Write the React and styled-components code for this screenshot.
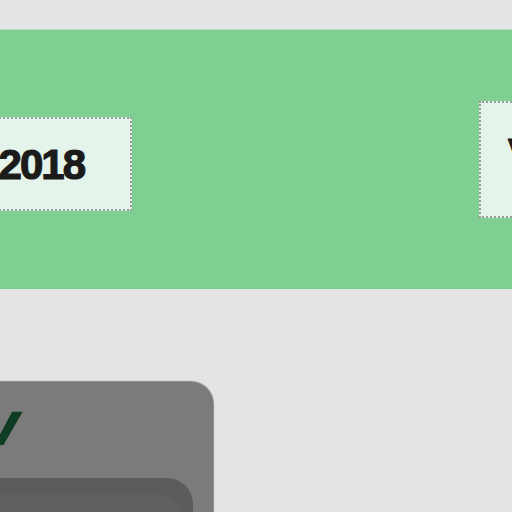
import React from "react";
import styled, { createGlobalStyle } from "styled-components";

const GlobalStyle = createGlobalStyle`
  html, body {
    margin: 0;
    padding: 0;
    background: #e4e4e4;
    font-family: "Liberation Sans", Arial, sans-serif;
    overflow: hidden;
  }
`;

const Page = styled.div`
  width: 512px;
  height: 512px;
  padding-top: 29px;
  box-sizing: border-box;
  overflow: hidden;
`;

const Band = styled.div`
  height: 260px;
  background: #7fcf92;
  border-top: 1px solid #b9dcc1;
  box-sizing: border-box;
  display: flex;
  align-items: center;
  justify-content: space-between;
  overflow: hidden;
`;

const Tag = styled.div`
  flex: none;
  box-sizing: border-box;
  background: #e4f4ea;
  border: 2px dotted #9a9a9a;
  display: flex;
  align-items: center;
  color: #1b1b1b;
  font-weight: 700;
  font-size: ${(p) => p.$size || 42}px;
  letter-spacing: -2px;
  -webkit-text-stroke: 1.2px #1b1b1b;
`;

const YearTag = styled(Tag)`
  width: 200px;
  height: 94px;
  margin-left: -68px;
  margin-top: 8px;
  justify-content: flex-end;
  padding-right: 46px;
  padding-top: 2px;
`;

const SideTag = styled(Tag)`
  width: 120px;
  height: 117px;
  margin-right: -87px;
  padding-left: 27px;
  padding-bottom: 12px;
`;

const Card = styled.div`
  margin-top: 93px;
  margin-left: -40px;
  width: 253px;
  height: 160px;
  background: #7b7b7b;
  border-radius: 22px;
  padding: 14px 20px 0 0;
  box-sizing: border-box;
  display: flex;
  flex-direction: column;
  box-shadow: 0 0 1px 1px #8a8a8a;
`;

const Script = styled.div`
  font-family: "DejaVu Sans", "Liberation Sans", sans-serif;
  font-style: italic;
  font-weight: 700;
  font-size: 60px;
  line-height: 56px;
  height: 44px;
  color: #0e3d24;
  padding-left: 22px;
  margin-top: 0;
`;

const Inner = styled.div`
  margin-top: 38px;
  height: 80px;
  background: #5b5b5b;
  border-radius: 26px;
  padding: 17px 10px 0 0;
  box-sizing: border-box;
`;

const InnerFill = styled.div`
  height: 60px;
  background: #606060;
  border-radius: 22px;
`;

export default function App() {
  return (
    <Page>
      <GlobalStyle />
      <Band>
        <YearTag>2018</YearTag>
        <SideTag $size={40}>V</SideTag>
      </Band>
      <Card>
        <Script>v</Script>
        <Inner>
          <InnerFill />
        </Inner>
      </Card>
    </Page>
  );
}
